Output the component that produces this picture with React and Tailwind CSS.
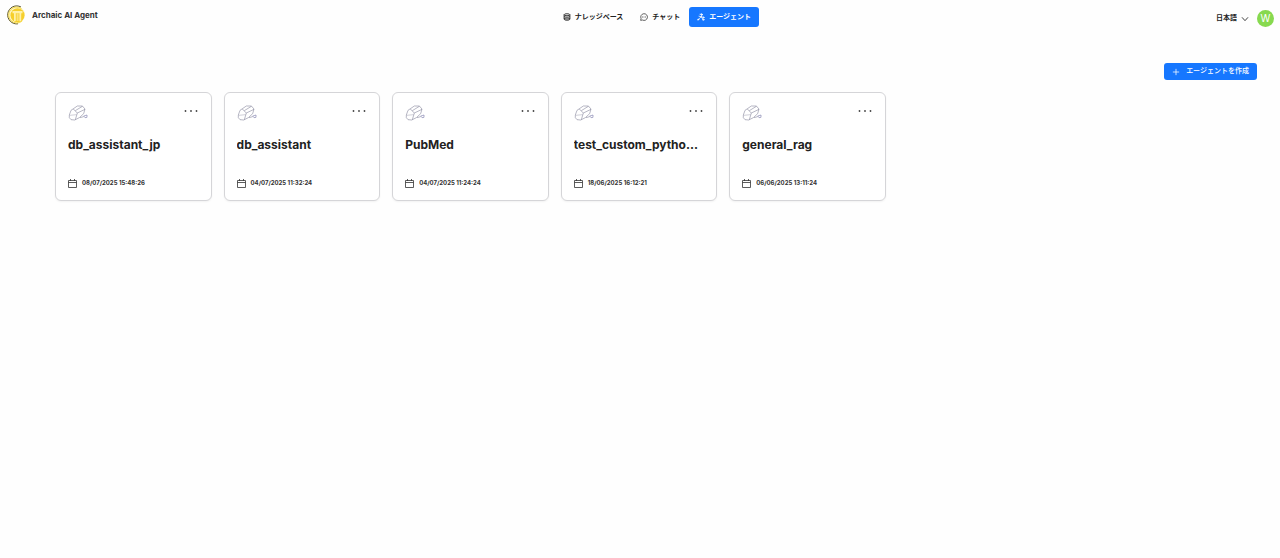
import React from "react";

const agents = [
  { name: "db_assistant_jp", date: "08/07/2025 15:48:26" },
  { name: "db_assistant", date: "04/07/2025 11:32:24" },
  { name: "PubMed", date: "04/07/2025 11:24:24" },
  { name: "test_custom_pytho...", date: "18/06/2025 16:12:21" },
  { name: "general_rag", date: "06/06/2025 13:11:24" },
];

function Logo() {
  return (
    <svg viewBox="0 0 20 20" className="size-5" aria-hidden="true">
      <circle cx="10" cy="10" r="9" fill="#fdf6c8" />
      <path d="M15 2A9 9 0 1 0 12 18.8" fill="none" stroke="#5b5534" strokeWidth="1" />
      <path d="M15.5 3.6A8 8 0 1 0 16 16" fill="none" stroke="#f5d94a" strokeWidth="1" />
      <circle cx="11.5" cy="10.2" r="7" fill="#f6cf2b" />
      <path d="M6.5 6h10v2.2h-10zM8 8.2h1.8V16H8zM13.4 8.2h1.8V16h-1.8z" fill="#fff1a8" />
      <path d="M10.6 8.2h2V16h-2z" fill="#fae27a" />
    </svg>
  );
}

function DatabaseIcon() {
  return (
    <svg viewBox="0 0 16 16" className="size-2" fill="none" stroke="currentColor" strokeWidth="1.8" aria-hidden="true">
      <ellipse cx="8" cy="3.5" rx="5.8" ry="2" />
      <path d="M2.2 3.5v9c0 2.6 11.6 2.6 11.6 0v-9M2.2 7c0 2 11.6 2 11.6 0M2.2 10.4c0 2 11.6 2 11.6 0" />
    </svg>
  );
}

function ChatIcon() {
  return (
    <svg viewBox="0 0 16 16" className="size-2" fill="none" stroke="currentColor" strokeWidth="1.4" aria-hidden="true">
      <path d="M1.3 14.7l.8-3.8A6.7 6.7 0 1 1 5 14z" />
      <path d="M4.3 8h1.6M7.2 8h1.6M10.1 8h1.6" strokeWidth="1.6" />
    </svg>
  );
}

function AgentIcon() {
  return (
    <svg viewBox="0 0 16 16" className="size-2" fill="none" stroke="currentColor" strokeWidth="1.5" strokeLinecap="round" aria-hidden="true">
      <path d="M6 2.5h4.5L8.5 7.5 2 13.5M8.5 7.5l3.5 1M8.5 7.5L12 13M4 6.5l4.5 1" />
      <circle cx="9" cy="3" r="1.4" />
      <circle cx="13" cy="8.8" r="1.1" />
      <circle cx="12.6" cy="13.4" r="1.4" />
      <circle cx="2.4" cy="13.2" r="1.1" />
    </svg>
  );
}

function RobotSketch() {
  return (
    <svg viewBox="0 0 60 48" className="h-4 w-5" fill="none" stroke="#77778f" strokeWidth="1.6" strokeLinejoin="round" aria-hidden="true">
      <path d="M4 30L9 16 28 3 43 3 51 12 47 26 34 38 20 45 9 44 4 38z" />
      <path d="M16 12L28 24 22 44M28 24L51 13M22 17L43 4" />
      <path d="M5 31L26 29" stroke="#a5a5b5" />
      <path d="M47 33L57 30 57 37 51 38z" stroke="#6a6aa0" />
      <path d="M36 38L47 35" />
    </svg>
  );
}

function CalendarIcon() {
  return (
    <svg viewBox="0 0 18 18" className="size-[9px]" fill="none" stroke="#333" strokeWidth="1.6" aria-hidden="true">
      <path d="M1 3h16v14H1zM1 7h16M5 0v4M13 0v4" />
    </svg>
  );
}

function AgentCard({ name, date }) {
  return (
    <article className="min-w-0 rounded-md border border-[#d5d5d8] bg-white px-3 pt-3 pb-[11px] shadow-[0_1px_2px_rgba(0,0,0,0.05)]">
      <div className="flex items-start justify-between">
        <RobotSketch />
        <button type="button" aria-label={`${name} menu`} className="flex h-3 w-4 items-center justify-center">
          <svg viewBox="0 0 14 4" className="h-1 w-3.5" fill="#444" aria-hidden="true">
            <circle cx="1.5" cy="2" r="0.9" />
            <circle cx="7" cy="2" r="0.9" />
            <circle cx="12.5" cy="2" r="0.9" />
          </svg>
        </button>
      </div>
      <h2 className="mt-3.5 truncate text-[12px] leading-5 font-bold text-[#222]">{name}</h2>
      <div className="mt-[22px] flex items-center gap-[5px] text-[6px] leading-3 font-bold text-[#333]">
        <CalendarIcon />
        <time>{date}</time>
      </div>
    </article>
  );
}

const tabs = [
  { label: "ナレッジベース", Icon: DatabaseIcon },
  { label: "チャット", Icon: ChatIcon },
  { label: "エージェント", Icon: AgentIcon, active: true },
];

export default function App() {
  return (
    <div className="min-h-screen bg-[#fefefe] font-['Inter','Noto_Sans_CJK_JP',sans-serif] text-[#222]">
      <header className="flex items-center justify-between px-1.5">
        <a href="#home" className="flex items-center gap-1.5 pb-1 text-[8px] font-bold text-[#333]">
          <Logo />
          Archaic AI Agent
        </a>
        <nav className="flex items-center gap-px py-[7px]">
          {tabs.map(({ label, Icon, active }) => (
            <a
              key={label}
              href="#tab"
              aria-current={active ? "page" : undefined}
              className={
                active
                  ? "flex h-5 items-center gap-1 rounded-[3px] bg-[#1677ff] px-2 text-[7px] font-bold text-white"
                  : "flex h-5 items-center gap-1 rounded-[3px] px-2 text-[7px] font-bold text-[#222]"
              }
            >
              <Icon />
              {label}
            </a>
          ))}
        </nav>
        <div className="flex items-center gap-2 pt-[3px]">
          <label className="flex items-center gap-1 text-[7px] font-bold">
            <select aria-label="言語" className="appearance-none bg-transparent">
              <option>日本語</option>
            </select>
            <svg viewBox="0 0 12 12" className="size-2" fill="none" stroke="#333" strokeWidth="1.4" aria-hidden="true">
              <path d="M1.5 3.5L6 8.5l4.5-5" />
            </svg>
          </label>
          <button type="button" className="flex size-[17px] items-center justify-center rounded-full bg-[#87d94f] text-[10px] text-white">
            W
          </button>
        </div>
      </header>
      <main className="pt-[29px]">
        <div className="flex justify-end pr-[23px]">
          <button type="button" className="flex h-[17px] items-center gap-1.5 rounded-[3px] bg-[#1677ff] px-2 text-[7px] font-medium text-white">
            <svg viewBox="0 0 14 14" className="size-2" fill="none" stroke="currentColor" strokeWidth="1.3" aria-hidden="true">
              <path d="M7 1.5v11M1.5 7h11" />
            </svg>
            エージェントを作成
          </button>
        </div>
        <section className="mt-3 grid grid-cols-7 gap-3 pr-[57px] pl-[55px]">
          {agents.map((agent) => (
            <AgentCard key={agent.name} {...agent} />
          ))}
        </section>
      </main>
    </div>
  );
}
